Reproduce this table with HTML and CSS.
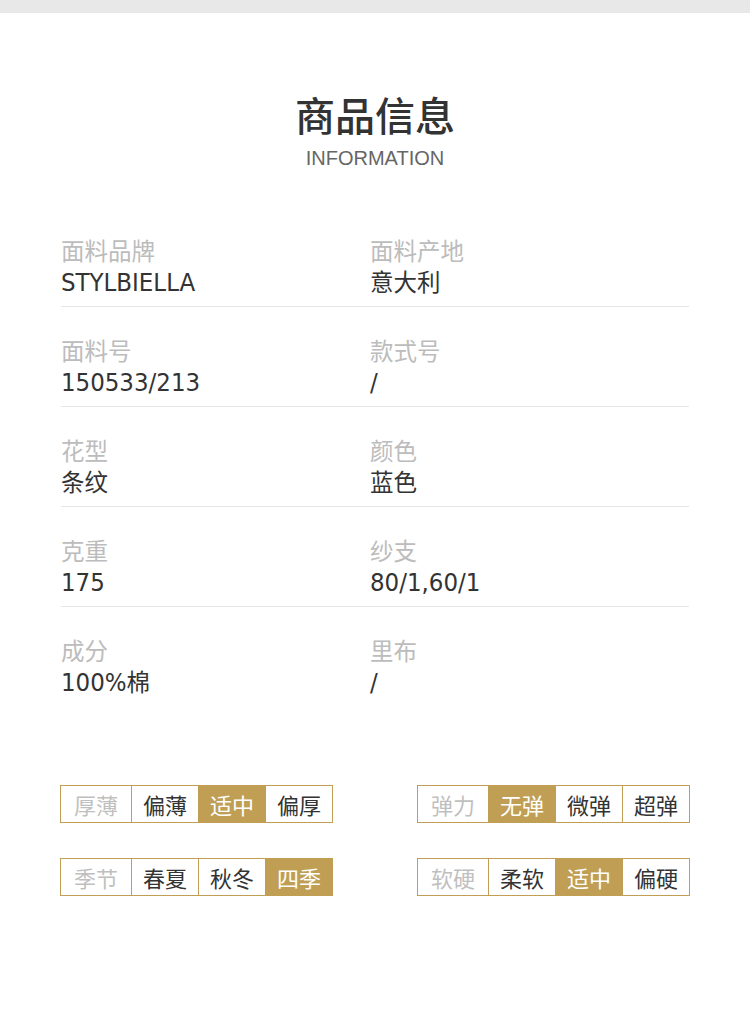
FILE: index.html
```html
<!DOCTYPE html>
<html lang="zh-CN">
<head>
<meta charset="utf-8">
<title>商品信息</title>
<link rel="stylesheet" href="styles.css">
</head>
<body>
<div class="topbar"></div>
<header class="head">
  <h1 class="title">商品信息</h1>
  <div class="subtitle">INFORMATION</div>
</header>
<section class="specs">
  <div class="row">
    <div class="cell"><div class="label">面料品牌</div><div class="value"><span class="lat">STYLBIELLA</span></div></div>
    <div class="cell"><div class="label">面料产地</div><div class="value">意大利</div></div>
  </div>
  <div class="row">
    <div class="cell"><div class="label">面料号</div><div class="value"><span class="lat">150533/213</span></div></div>
    <div class="cell"><div class="label">款式号</div><div class="value"><span class="lat">/</span></div></div>
  </div>
  <div class="row">
    <div class="cell"><div class="label">花型</div><div class="value">条纹</div></div>
    <div class="cell"><div class="label">颜色</div><div class="value">蓝色</div></div>
  </div>
  <div class="row">
    <div class="cell"><div class="label">克重</div><div class="value"><span class="lat">175</span></div></div>
    <div class="cell"><div class="label">纱支</div><div class="value"><span class="lat">80/1,60/1</span></div></div>
  </div>
  <div class="row last">
    <div class="cell"><div class="label">成分</div><div class="value"><span class="lat">100%</span>棉</div></div>
    <div class="cell"><div class="label">里布</div><div class="value"><span class="lat">/</span></div></div>
  </div>
</section>
<section class="tags">
  <div class="tagrow">
    <div class="group">
      <div class="opt head-opt">厚薄</div>
      <div class="opt">偏薄</div>
      <div class="opt on">适中</div>
      <div class="opt">偏厚</div>
    </div>
    <div class="group">
      <div class="opt head-opt">弹力</div>
      <div class="opt on">无弹</div>
      <div class="opt">微弹</div>
      <div class="opt">超弹</div>
    </div>
  </div>
  <div class="tagrow">
    <div class="group">
      <div class="opt head-opt">季节</div>
      <div class="opt">春夏</div>
      <div class="opt">秋冬</div>
      <div class="opt on">四季</div>
    </div>
    <div class="group">
      <div class="opt head-opt">软硬</div>
      <div class="opt">柔软</div>
      <div class="opt on">适中</div>
      <div class="opt">偏硬</div>
    </div>
  </div>
</section>
</body>
</html>
```
FILE: styles.css
```css
* { box-sizing: border-box; }
html, body { margin: 0; padding: 0; background: #fff; }
body {
  font-family: "Noto Sans CJK SC", "Liberation Sans", sans-serif;
  color: #333;
  width: 750px;
}
.topbar { height: 13px; background: #e8e8e8; }
.head { text-align: center; padding-top: 77px; }
.title {
  margin: 0;
  font-family: "Noto Sans CJK SC", sans-serif;
  font-size: 40px;
  line-height: 48px;
  font-weight: 500;
  color: #333;
}
.subtitle {
  margin-top: 7px;
  font-family: "Liberation Sans", sans-serif;
  font-size: 20px;
  line-height: 26px;
  color: #666;
}
.specs { padding: 0 61px; margin-top: 36px; }
.row {
  display: grid;
  grid-template-columns: 309px 1fr;
  padding: 28px 0 9px;
  border-bottom: 1px solid #e6e6e6;
}
.row.last { border-bottom: none; }
.label { font-size: 23.5px; line-height: 31px; color: #bcbcbc; }
.value { font-size: 23.5px; line-height: 31px; height: 31px; color: #333; }
.lat {
  font-family: "DejaVu Sans Condensed", "DejaVu Sans", sans-serif;
  font-stretch: condensed;
  font-size: 25.5px;
  line-height: 20px;
}
.tags { padding: 0 60px; margin-top: 79px; }
.tagrow { display: flex; justify-content: space-between; margin-bottom: 35px; }
.group {
  display: flex;
  border: 1px solid #c09f55;
  height: 38px;
}
.opt {
  width: 67px;
  border-left: 1px solid #c09f55;
  display: flex;
  align-items: center;
  justify-content: center;
  font-size: 22px;
  color: #333;
}
.opt.head-opt { width: 70px; border-left: none; color: #bfbfbf; }
.opt.on { background: #c09f55; color: #fff; }
```
